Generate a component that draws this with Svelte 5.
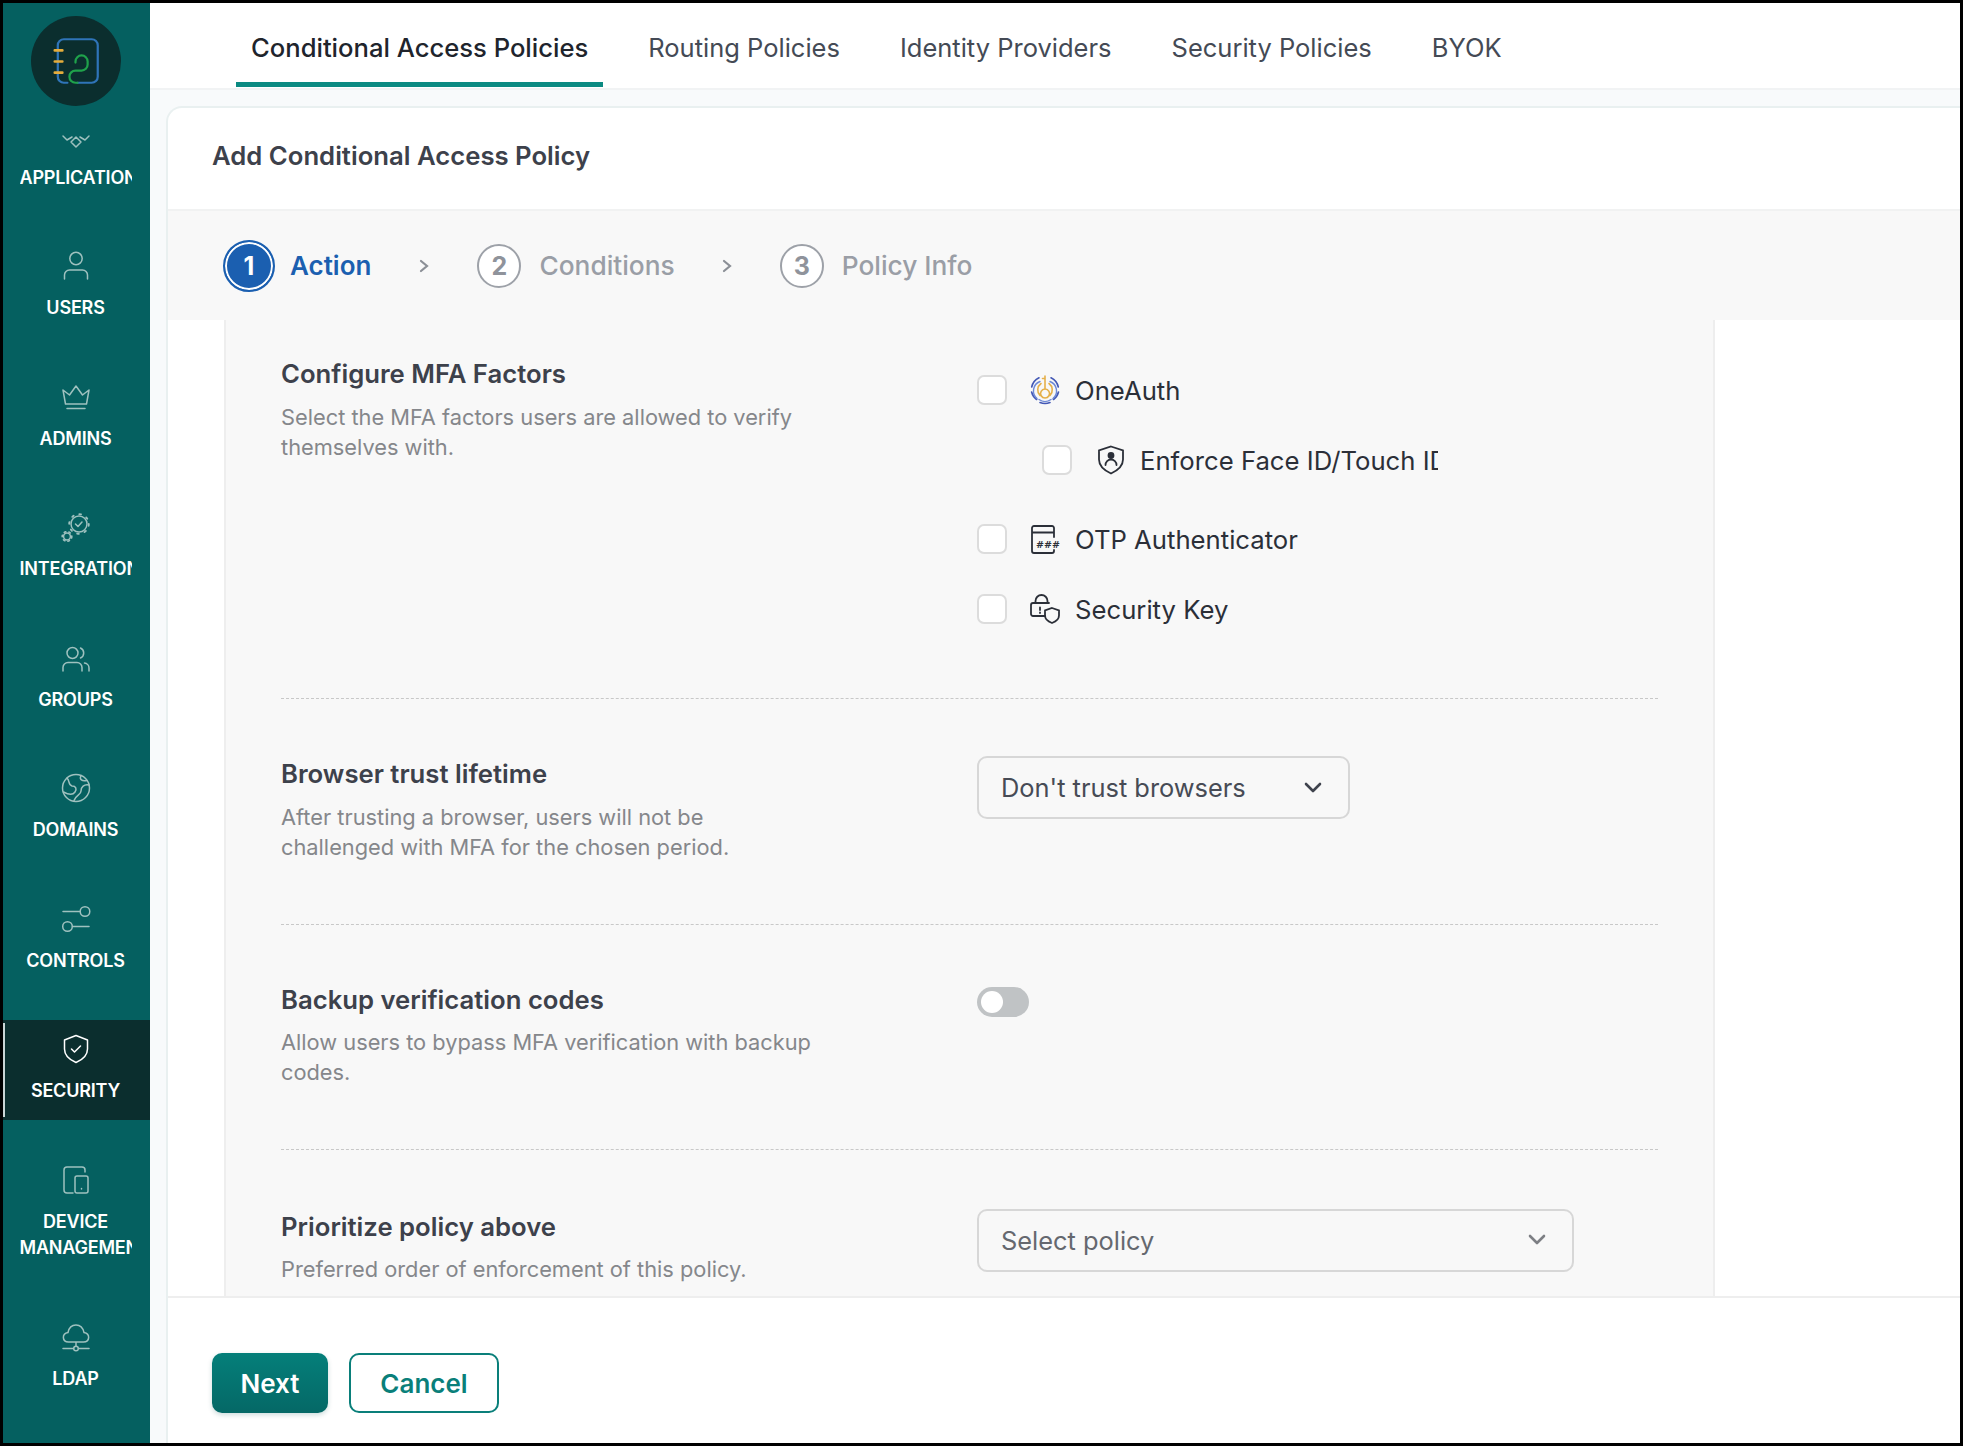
<script>
  const tabs = ['Conditional Access Policies', 'Routing Policies', 'Identity Providers', 'Security Policies', 'BYOK'];
</script>

<div class="frame">
  <aside class="sidebar">
    <div class="logo-wrap">
      <svg class="logo" width="90" height="90" viewBox="0 0 89 89" fill="none" stroke-linecap="round">
        <circle cx="44.5" cy="44.5" r="44.5" fill="#0b2e2e" />
        <path d="M26.5 60V29a6 6 0 0 1 6-6H60a6 6 0 0 1 6 6v31a6 6 0 0 1-6 6H46M26.5 60a6 6 0 0 0 6 6H36" stroke="#2f74b8" stroke-width="2.2" />
        <path d="M44 46v-1a6 6 0 0 1 12 0v3a6 6 0 0 1-6 6h-6a6 6 0 0 0-6 6 6 6 0 0 0 6 6h2" stroke="#1fa24b" stroke-width="2.2" />
        <path d="M23.5 34H31M23.5 45H31M23.5 56H31" stroke="#e5ad3c" stroke-width="2.6" />
      </svg>
    </div>
    <nav>
      <a class="item">
        <svg viewBox="0 0 30 30"><path d="M2 15l4 4 5-3M28 15l-4 4-5-3M15 16l5 5-5 5-5-5z" /></svg>
        <span>APPLICATIONS</span>
      </a>
      <a class="item">
        <svg viewBox="0 0 30 30"><circle cx="15" cy="7.5" r="6.2" /><path d="M3.5 28v-4a5 5 0 0 1 5-5h13a5 5 0 0 1 5 5v4" /></svg>
        <span>USERS</span>
      </a>
      <a class="item">
        <svg viewBox="0 0 30 30"><path d="M2 8l6.5 5L15 4l6.500 9L28 8l-2.500 14h-21zM6 26.500h18" /></svg>
        <span>ADMINS</span>
      </a>
      <a class="item">
        <svg viewBox="0 0 30 30">
          <circle cx="18" cy="12" r="8" />
          <circle cx="18" cy="12" r="9.800" stroke-width="1.800" stroke-dasharray="1.800 5.900" />
          <path d="M14.500 12l2.500 2.500 4-4.500" />
          <circle cx="6" cy="24.500" r="3.400" />
          <circle cx="6" cy="24.500" r="4.800" stroke-width="1.600" stroke-dasharray="1.600 3.200" />
        </svg>
        <span>INTEGRATIONS</span>
      </a>
      <a class="item">
        <svg viewBox="0 0 30 30"><circle cx="11.500" cy="10" r="5.500" /><path d="M19.500 5a5.500 5.500 0 0 1 0 10M2 28v-3.500a5 5 0 0 1 5-5h9a5 5 0 0 1 5 5V28M23.500 20a5 5 0 0 1 4.500 5v3" /></svg>
        <span>GROUPS</span>
      </a>
      <a class="item">
        <svg viewBox="0 0 30 30"><circle cx="15" cy="15" r="13.500" /><path d="M6 5c3 3 1 7 5 8 4 0 5 3 3 6-2 3-6 3-11.500 0M20 2.500c-2 4 1 6 6 5M28 12c-5-1-8 2-8 6s-5 4-7 9.500" /></svg>
        <span>DOMAINS</span>
      </a>
      <a class="item">
        <svg viewBox="0 0 30 30"><path d="M2 7.500h17M11.500 22.500H28" /><circle cx="24" cy="7.500" r="4.800" /><circle cx="6.500" cy="22.500" r="4.800" /></svg>
        <span>CONTROLS</span>
      </a>
      <a class="item active">
        <svg viewBox="0 0 30 30"><path d="M15 1.500L26.500 6v9c0 7-5.500 11-11.500 13.500C9 26 3.500 22 3.500 15V6z" /><path d="M10.500 15l3 3 6-6" /></svg>
        <span>SECURITY</span>
      </a>
      <a class="item">
        <svg viewBox="0 0 30 30"><path d="M12 28H6a3 3 0 0 1-3-3V5a3 3 0 0 1 3-3h15a3 3 0 0 1 3 3v2" /><rect x="14" y="11" width="13" height="17" rx="2" /><path d="M20.500 23.500v.5" /></svg>
        <span>DEVICE<br />MANAGEMENT</span>
      </a>
      <a class="item ldap">
        <svg viewBox="0 0 30 30"><path d="M7.500 20C1 20 .5 11.500 7 10.500 8 5.500 11.500 3 15 3c4 0 7 3 8 7.500 6.500 1 6 9.500-.5 9.500zM15 20v4M2 26.500h10.500M17.500 26.500H28" /><circle cx="15" cy="26.500" r="2.300" /></svg>
        <span>LDAP</span>
      </a>
    </nav>
  </aside>

  <main class="main">
    <header class="tabbar">
      {#each tabs as tab, i}
        <div class="tab" class:selected={i === 0}>{tab}</div>
      {/each}
    </header>

    <section class="card">
      <div class="card-head">Add Conditional Access Policy</div>

      <div class="stepper">
        <div class="num current">1</div>
        <div class="step-name current-name">Action</div>
        <svg class="arrow first" width="14" height="18" viewBox="0 0 14 18"><path d="M4 4l6 5-6 5" /></svg>
        <div class="num">2</div>
        <div class="step-name">Conditions</div>
        <svg class="arrow" width="14" height="18" viewBox="0 0 14 18"><path d="M4 4l6 5-6 5" /></svg>
        <div class="num">3</div>
        <div class="step-name">Policy Info</div>
      </div>

      <div class="body">
        <div class="panel">
          <div class="row first-row">
            <div>
              <h3>Configure MFA Factors</h3>
              <p>Select the MFA factors users are allowed to verify<br />themselves with.</p>
            </div>
            <div class="factors">
              <label class="factor">
                <span class="check"></span>
                <svg class="f-icon" width="30" height="30" viewBox="0 0 30 30" fill="none" stroke-linecap="round">
                  <path d="M9 2.800A13.500 13.500 0 0 0 1.700 12M1.600 17a13.500 13.500 0 0 0 5 7.500M10 27.500a13.500 13.500 0 0 0 10 0M23.500 24.500a13.500 13.500 0 0 0 5-7.500M28.300 12A13.500 13.500 0 0 0 21 2.800" stroke="#4358b5" stroke-width="1.600" />
                  <path d="M10 6.500a10 10 0 0 0-3 17M20 6.500a10 10 0 0 1 3 17M9 24.500a10 10 0 0 0 12 0" stroke="#6d88d6" stroke-width="1.400" />
                  <path d="M15 1v13M12.500 3.500H15M15 14a4.500 4.500 0 1 0 .1 0zM11 8.500a8 8 0 0 0-1 12M19 8.500a8 8 0 0 1 1 12" stroke="#e5b04a" stroke-width="1.600" />
                </svg>
                <span class="f-label">OneAuth</span>
              </label>
              <label class="factor nested">
                <span class="check"></span>
                <svg class="f-icon" width="28" height="30" viewBox="0 0 28 30" fill="none" stroke="#2b2f38" stroke-width="1.800" stroke-linecap="round">
                  <path d="M14 1.500L26 5.500v9c0 6.500-5.500 11-12 14-6.500-3-12-7.500-12-14v-9z" />
                  <circle cx="14" cy="10.500" r="2.500" fill="#2b2f38" />
                  <path d="M8.500 20a5.500 5.500 0 0 1 11 0" />
                </svg>
                <span class="f-label clipped">Enforce Face ID/Touch ID</span>
              </label>
              <label class="factor otp">
                <span class="check"></span>
                <svg class="f-icon" width="30" height="30" viewBox="0 0 30 30" fill="none" stroke="#2b2f38" stroke-width="1.800" stroke-linecap="round">
                  <path d="M24 13V4a2 2 0 0 0-2-2H4a2 2 0 0 0-2 2v23a2 2 0 0 0 2 2h18a2 2 0 0 0 2-2v-1M2 8.500h22" />
                  <text x="6" y="23.500" class="hash">###</text>
                </svg>
                <span class="f-label">OTP Authenticator</span>
              </label>
              <label class="factor">
                <span class="check"></span>
                <svg class="f-icon" width="30" height="30" viewBox="0 0 30 30" fill="none" stroke="#2b2f38" stroke-width="1.800" stroke-linecap="round">
                  <path d="M15 22H3a2 2 0 0 1-2-2V11a2 2 0 0 1 2-2h16M5.500 9V7a6 6 0 0 1 12 0v2M10 13.500v2.500M10 18.500v.5" />
                  <path d="M22 14l7 2.500v5c0 3.500-3 6-7 7.500-4-1.500-7-4-7-7.500v-5z" />
                </svg>
                <span class="f-label">Security Key</span>
              </label>
            </div>
          </div>

          <div class="row">
            <div>
              <h3>Browser trust lifetime</h3>
              <p>After trusting a browser, users will not be<br />challenged with MFA for the chosen period.</p>
            </div>
            <div>
              <div class="select short">
                <span>Don't trust browsers</span>
                <svg width="20" height="14" viewBox="0 0 20 14"><path d="M3 3l7 7 7-7" /></svg>
              </div>
            </div>
          </div>

          <div class="row">
            <div>
              <h3>Backup verification codes</h3>
              <p>Allow users to bypass MFA verification with backup<br />codes.</p>
            </div>
            <div>
              <div class="toggle"><span class="knob"></span></div>
            </div>
          </div>

          <div class="row last">
            <div>
              <h3>Prioritize policy above</h3>
              <p>Preferred order of enforcement of this policy.</p>
            </div>
            <div>
              <div class="select wide">
                <span>Select policy</span>
                <svg width="20" height="14" viewBox="0 0 20 14"><path d="M3 3l7 7 7-7" /></svg>
              </div>
            </div>
          </div>
        </div>
      </div>

      <footer class="footer">
        <button class="btn next">Next</button>
        <button class="btn cancel">Cancel</button>
      </footer>
    </section>
  </main>
</div>

<style>
  :global(body) {
    margin: 0;
    background: #000;
  }

  .frame {
    box-sizing: border-box;
    width: 1963px;
    height: 1446px;
    border: 3px solid #000;
    display: flex;
    overflow: hidden;
    font-family: Inter, "Liberation Sans", sans-serif;
  }

  .sidebar {
    width: 147px;
    flex: none;
    background: #056060;
    color: #fff;
  }

  .logo-wrap {
    height: 103.5px;
    padding: 13px 0 0 28px;
    box-sizing: border-box;
  }

  .logo {
    display: block;
  }

  nav {
    display: flex;
    flex-direction: column;
    gap: 30.5px;
  }

  .item {
    position: relative;
    display: flex;
    flex-direction: column;
    align-items: center;
    height: 100px;
    padding: 14px 2px 0 0;
    box-sizing: border-box;
  }

  .item svg {
    width: 30px;
    height: 30px;
    fill: none;
    stroke: #9fc1bf;
    stroke-width: 1.500;
    stroke-linecap: round;
    stroke-linejoin: round;
  }

  .item span {
    display: block;
    width: 112px;
    margin-top: 14px;
    overflow: hidden;
    white-space: nowrap;
    text-align: center;
    font-size: 18px;
    line-height: 26px;
    font-weight: 600;
    letter-spacing: -0.2px;
  }

  .item:nth-child(9) {
    height: 127px;
  }

  .item.active {
    background: #0b2e2e;
  }

  .item.active svg {
    stroke: #fff;
  }

  .item.active::before {
    content: "";
    position: absolute;
    left: 0;
    top: 3px;
    bottom: 3px;
    width: 2px;
    background: #c9d6d6;
  }

  .main {
    flex: 1;
    min-width: 0;
    display: flex;
    flex-direction: column;
    background: #f8fafb;
  }

  .tabbar {
    flex: none;
    height: 87px;
    box-sizing: border-box;
    padding-left: 86px;
    display: flex;
    gap: 30px;
    background: #fff;
    border-bottom: 2px solid #f1f3f4;
  }

  .tab {
    height: 84px;
    box-sizing: border-box;
    padding: 9px 15px 0;
    display: flex;
    align-items: center;
    font-size: 25.5px;
    color: #444a55;
    border-bottom: 5px solid transparent;
  }

  .tab.selected {
    color: #20242c;
    font-size: 25.6px;
    font-weight: 500;
    border-bottom-color: #0b8a82;
  }

  .card {
    flex: 1;
    min-height: 0;
    margin: 16px 0 0 16px;
    display: flex;
    flex-direction: column;
    background: #fff;
    border: 2px solid #e9f0f0;
    border-width: 2px 0 0 2px;
    border-top-left-radius: 16px;
  }

  .card-head {
    flex: none;
    height: 103px;
    box-sizing: border-box;
    padding: 0 0 7px 44px;
    display: flex;
    align-items: center;
    font-size: 25.7px;
    font-weight: 600;
    color: #3d414b;
    border-bottom: 2px solid #f1f2f2;
  }

  .stepper {
    flex: none;
    height: 109px;
    box-sizing: border-box;
    padding-left: 55px;
    display: flex;
    align-items: center;
    background: #f8f8f8;
  }

  .num {
    width: 44px;
    height: 44px;
    box-sizing: border-box;
    border: 2px solid #9da1a8;
    border-radius: 50%;
    display: flex;
    align-items: center;
    justify-content: center;
    font-size: 25px;
    font-weight: 700;
    color: #8f939b;
    background: #fff;
  }

  .num.current {
    width: 52px;
    height: 52px;
    border: 2px solid #1b5fb0;
    background: #1b5fb0;
    color: #fff;
    box-shadow: inset 0 0 0 2px #fff;
  }

  .step-name {
    margin-left: 18px;
    font-size: 26.3px;
    font-weight: 500;
    color: #9a9ea6;
  }

  .step-name.current-name {
    margin-left: 15px;
    font-size: 26px;
    font-weight: 600;
    color: #1b5fb0;
  }

  .arrow {
    margin: 0 46px 0 45px;
    fill: none;
    stroke: #8b8f96;
    stroke-width: 2.200;
    stroke-linecap: round;
  }

  .arrow.first {
    margin-left: 46px;
  }

  .body {
    flex: 1;
    min-height: 0;
    overflow: hidden;
    padding-left: 56px;
    background: #fff;
  }

  .panel {
    box-sizing: border-box;
    width: 1491px;
    min-height: 100%;
    padding: 0 55px;
    background: #f8f8f8;
    border: 2px solid #eeeeee;
    border-width: 0 2px;
  }

  .row {
    display: grid;
    grid-template-columns: 696px 1fr;
    padding: 57px 0 62px;
    border-bottom: 1px dashed #c8c8c8;
  }

  .row.first-row {
    padding-top: 36px;
    padding-bottom: 0;
    height: 379px;
    box-sizing: border-box;
  }

  .row.last {
    border-bottom: 0;
    padding-top: 58.5px;
  }

  h3 {
    margin: 0 0 9.5px;
    font-size: 25.7px;
    line-height: 36px;
    font-weight: 600;
    color: #3d414b;
  }

  p {
    margin: 0;
    font-size: 21.8px;
    line-height: 30px;
    color: #85878b;
  }

  .factors {
    display: flex;
    flex-direction: column;
    padding-top: 19px;
  }

  .factor {
    display: flex;
    align-items: center;
    height: 30px;
    margin-bottom: 40px;
  }

  .factor.nested {
    margin-left: 65px;
    margin-bottom: 49px;
  }

  .check {
    flex: none;
    width: 30px;
    height: 30px;
    box-sizing: border-box;
    background: #fff;
    border: 2px solid #dcdcdc;
    border-radius: 7px;
  }

  .f-icon {
    flex: none;
    margin-left: 23px;
  }

  .nested .f-icon {
    margin-left: 25px;
  }

  .f-label {
    margin-left: 15px;
    font-size: 25.7px;
    color: #2b2f38;
    white-space: nowrap;
  }

  .f-label.clipped {
    margin-left: 15px;
    width: 298px;
    overflow: hidden;
  }

  .hash {
    font-family: "DejaVu Sans", sans-serif;
    font-size: 9.500px;
    font-weight: 700;
    fill: #2b2f38;
    stroke: none;
    letter-spacing: 0;
  }

  .select {
    box-sizing: border-box;
    height: 63px;
    padding: 0 25px 0 22px;
    display: flex;
    align-items: center;
    justify-content: space-between;
    border: 2px solid #d7d7d7;
    border-radius: 10px;
    font-size: 25.4px;
    color: #474b55;
  }

  .select svg {
    fill: none;
    stroke: #3f434d;
    stroke-width: 2.600;
    stroke-linecap: round;
    stroke-linejoin: round;
  }

  .select.short {
    width: 373px;
  }

  .select.wide {
    width: 597px;
    color: #65686f;
  }

  .select.wide svg {
    stroke: #7d7f84;
  }

  .toggle {
    width: 52px;
    height: 30px;
    margin-top: 5px;
    padding: 4px;
    box-sizing: border-box;
    border-radius: 15px;
    background: #c0c3c5;
  }

  .knob {
    display: block;
    width: 22px;
    height: 22px;
    border-radius: 50%;
    background: #fff;
  }

  .footer {
    flex: none;
    height: 147px;
    box-sizing: border-box;
    padding: 55px 0 0 44px;
    display: flex;
    align-items: flex-start;
    gap: 21px;
    border-top: 2px solid #eeeeee;
    background: #fff;
  }

  .btn {
    height: 60px;
    box-sizing: border-box;
    border-radius: 10px;
    font-family: inherit;
    font-size: 26px;
    font-weight: 600;
  }

  .next {
    width: 116px;
    color: #fff;
    border: 0;
    background: linear-gradient(#057f7a, #056866);
    box-shadow: 0 2px 5px rgba(0, 80, 80, 0.2);
  }

  .cancel {
    width: 150px;
    color: #0a7f7a;
    background: #fff;
    border: 2px solid #0a7f7a;
  }
</style>
